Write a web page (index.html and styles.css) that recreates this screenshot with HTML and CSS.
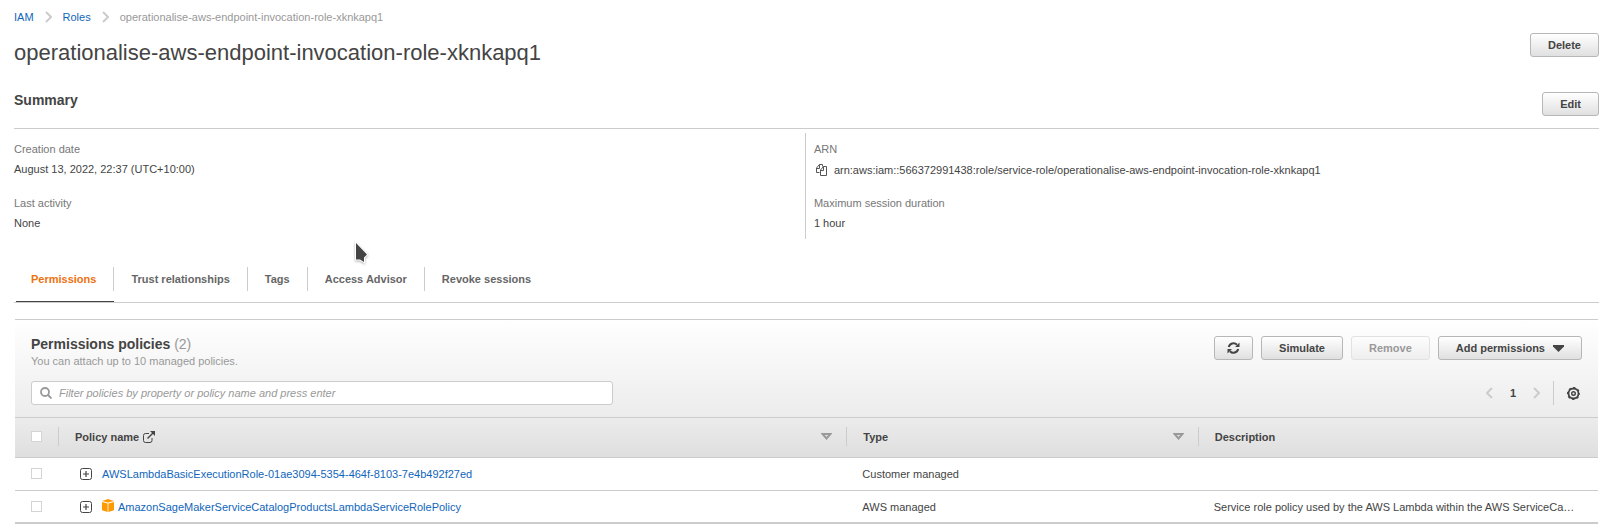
FILE: index.html
```html
<!DOCTYPE html>
<html lang="en">
<head>
<meta charset="utf-8">
<title>IAM role</title>
<link rel="stylesheet" href="styles.css">
</head>
<body>
<main class="page">
  <nav class="crumbs" aria-label="Breadcrumb">
    <a href="#iam">IAM</a>
    <svg class="chevron" width="7" height="12" viewBox="0 0 7 12"><path d="M1 1l5 5-5 5"/></svg>
    <a href="#roles">Roles</a>
    <svg class="chevron" width="7" height="12" viewBox="0 0 7 12"><path d="M1 1l5 5-5 5"/></svg>
    <span>operationalise-aws-endpoint-invocation-role-xknkapq1</span>
  </nav>

  <header class="title-row">
    <h1>operationalise-aws-endpoint-invocation-role-xknkapq1</h1>
    <button type="button" class="btn">Delete</button>
  </header>

  <section>
    <div class="summary-head">
      <h2>Summary</h2>
      <button type="button" class="btn">Edit</button>
    </div>
    <div class="summary">
      <dl class="facts">
        <dt>Creation date</dt>
        <dd>August 13, 2022, 22:37 (UTC+10:00)</dd>
        <dt>Last activity</dt>
        <dd>None</dd>
      </dl>
      <dl class="facts facts-right">
        <dt>ARN</dt>
        <dd class="arn">
          <button type="button" class="icon-btn" aria-label="Copy ARN"><svg width="11" height="12" viewBox="0 0 11 12" fill="none" stroke="#555" stroke-width="1"><path d="M3.500 8.500H.5V4L3.500.5H6.500V2.500M.5 4.500H3.500V.5M4.500 11.500V6L7.500 2.500H10.500V11.500ZM4.500 6.500H7.500V2.500"/></svg></button>
          <span>arn:aws:iam::566372991438:role/service-role/operationalise-aws-endpoint-invocation-role-xknkapq1</span>
        </dd>
        <dt>Maximum session duration</dt>
        <dd>1 hour</dd>
      </dl>
    </div>
  </section>

  <nav class="tabs" aria-label="Role details">
    <a class="tab active" href="#permissions">Permissions</a>
    <a class="tab" href="#trust">Trust relationships</a>
    <a class="tab" href="#tags">Tags</a>
    <a class="tab" href="#advisor">Access Advisor</a>
    <a class="tab" href="#sessions">Revoke sessions</a>
  </nav>

  <section class="panel">
    <div class="panel-head">
      <div class="panel-row">
        <div>
          <h2>Permissions policies <span class="count">(2)</span></h2>
          <p class="hint">You can attach up to 10 managed policies.</p>
        </div>
        <div class="actions">
          <button type="button" class="btn btn-icon" aria-label="Refresh"><svg width="13" height="12" viewBox="0 0 13 12" fill="none" stroke="#444" stroke-width="2"><path d="M1.800 5A4.800 4.800 0 0 1 10 2.800M11.200 7A4.800 4.800 0 0 1 3 9.200"/><path d="M12.500 .5V5H8ZM.5 11.500V7H5Z" fill="#444" stroke="none"/></svg></button>
          <button type="button" class="btn">Simulate</button>
          <button type="button" class="btn" disabled>Remove</button>
          <button type="button" class="btn">Add permissions<svg class="caret" width="11" height="7" viewBox="0 0 11 7"><path d="M0 0H11V1.500L5.500 7 0 1.500Z" fill="#444"/></svg></button>
        </div>
      </div>
      <div class="panel-row">
        <label class="search">
          <svg width="12" height="12" viewBox="0 0 12 12" fill="none" stroke="#999" stroke-width="1.800"><circle cx="5" cy="5" r="4"/><path d="M8 8l3.500 3.500"/></svg>
          <input type="text" aria-label="Filter policies" placeholder="Filter policies by property or policy name and press enter">
        </label>
        <div class="pager">
          <button type="button" class="icon-btn" aria-label="Previous page"><svg class="chevron" width="7" height="12" viewBox="0 0 7 12"><path d="M6 1L1 6l5 5"/></svg></button>
          <b>1</b>
          <button type="button" class="icon-btn" aria-label="Next page"><svg class="chevron" width="7" height="12" viewBox="0 0 7 12"><path d="M1 1l5 5-5 5"/></svg></button>
          <button type="button" class="icon-btn settings" aria-label="Settings"><svg width="13" height="13" viewBox="0 0 13 13" fill="none" stroke="#444"><circle cx="6.500" cy="6.500" r="5" stroke-width="1.800"/><circle cx="6.500" cy="6.500" r="5.900" stroke-width="1.200" stroke-dasharray="2.320 2.320" stroke-dashoffset="1.160"/><circle cx="6.500" cy="6.500" r="1.800" stroke-width="1.400"/></svg></button>
        </div>
      </div>
    </div>

    <table class="policies">
      <colgroup><col class="c-check"><col class="c-name"><col class="c-type"><col class="c-desc"></colgroup>
      <thead>
        <tr>
          <th><input type="checkbox" aria-label="Select all policies"></th>
          <th><div class="th">Policy name <svg class="external" width="12" height="12" viewBox="0 0 12 12" fill="none" stroke="#444"><path d="M6 2.500H2.500a2 2 0 0 0-2 2V9.500a2 2 0 0 0 2 2H7a2 2 0 0 0 2-2V7"/><path d="M4.500 7.500L10 2" stroke-width="1.500"/><path d="M7 0H12V5Z" fill="#444" stroke="none"/></svg><svg class="sort" width="11" height="7" viewBox="0 0 11 7"><path d="M1.500 1H9.500L5.500 5.500Z"/></svg></div></th>
          <th><div class="th">Type<svg class="sort" width="11" height="7" viewBox="0 0 11 7"><path d="M1.500 1H9.500L5.500 5.500Z"/></svg></div></th>
          <th><div class="th">Description</div></th>
        </tr>
      </thead>
      <tbody>
        <tr>
          <td><input type="checkbox" aria-label="Select AWSLambdaBasicExecutionRole"></td>
          <td><div class="name"><button type="button" class="icon-btn" aria-label="Expand"><svg width="12" height="12" viewBox="0 0 12 12" fill="none" stroke="#444"><rect x=".5" y=".5" width="11" height="11" rx="2"/><path d="M3 6H9M6 3V9" stroke-width="1.200"/></svg></button><a href="#policy-1">AWSLambdaBasicExecutionRole-01ae3094-5354-464f-8103-7e4b492f27ed</a></div></td>
          <td>Customer managed</td>
          <td></td>
        </tr>
        <tr>
          <td><input type="checkbox" aria-label="Select AmazonSageMakerServiceCatalogProductsLambdaServiceRolePolicy"></td>
          <td><div class="name"><button type="button" class="icon-btn" aria-label="Expand"><svg width="12" height="12" viewBox="0 0 12 12" fill="none" stroke="#444"><rect x=".5" y=".5" width="11" height="11" rx="2"/><path d="M3 6H9M6 3V9" stroke-width="1.200"/></svg></button><a href="#policy-2"><svg width="12" height="13" viewBox="0 0 12 13" fill="#f90"><path d="M0 2L6 0l6 2-6 1.500ZM0 3l5.600 1.400V13L0 11.200ZM12 3L6.400 4.400V13l5.600-1.800Z"/></svg>AmazonSageMakerServiceCatalogProductsLambdaServiceRolePolicy</a></div></td>
          <td>AWS managed</td>
          <td class="desc">Service role policy used by the AWS Lambda within the AWS ServiceCa…</td>
        </tr>
      </tbody>
    </table>
  </section>
</main>
<svg class="pointer" width="18" height="26" viewBox="0 0 18 26"><path d="M3 3V19.500H7L11 22V17.500L14 14.500Z" fill="#444" stroke="#fff" stroke-width="2" paint-order="stroke"/></svg>
</body>
</html>
```

FILE: styles.css
```css
* { box-sizing: border-box; }
body {
  margin: 0;
  background: #fff;
  color: #444;
  font: 11px/16px "Liberation Sans", Arial, sans-serif;
}
h1, h2, p, dl, dd { margin: 0; }
a { color: #1166bb; text-decoration: none; }
svg { display: block; flex: none; }
button { font-family: inherit; }
.page { padding: 9px 10px 0 14px; }

.crumbs { display: flex; align-items: center; gap: 11px; color: #999; }
.chevron { fill: none; stroke: #ccc; stroke-width: 2; }

.title-row { display: flex; justify-content: space-between; align-items: flex-start; padding-top: 8px; }
h1 { font-size: 22px; line-height: 40px; font-weight: 400; }
h2 { font-size: 14px; line-height: 18px; font-weight: 700; }

.btn {
  display: flex;
  align-items: center;
  height: 24px;
  padding: 0 17px;
  border: 1px solid #b7b7b7;
  border-radius: 3px;
  background: linear-gradient(#fff, #e0e0e0);
  color: #444;
  font-size: 11px;
  line-height: 16px;
  font-weight: 700;
}
.btn:disabled { border-color: #e2e2e2; background: linear-gradient(#fdfdfd, #eee); color: #999; }
.btn-icon { padding: 0 12px; }
.caret { margin-left: 8px; }
.icon-btn { display: flex; padding: 0; border: 0; background: none; }

.summary-head {
  display: flex;
  justify-content: space-between;
  align-items: flex-start;
  padding: 18px 0 12px;
  border-bottom: 1px solid #ccc;
}
.summary-head .btn { margin-top: 1px; }
.summary { display: grid; grid-template-columns: 49.9% 50.1%; padding-top: 4px; }
.facts { padding: 8px 0; }
.facts-right { padding-left: 8px; border-left: 1px solid #ccc; }
dt { color: #777; }
dd { padding: 4px 0 18px; }
dd:last-child { padding-bottom: 0; }
.arn { display: flex; align-items: center; gap: 7px; padding: 5px 0 17px 2px; }

.tabs { display: flex; margin-top: 21px; padding: 7px 0 0 2px; border-bottom: 1px solid #ccc; }
.tab { display: flex; padding-bottom: 10px; border-bottom: 1px solid transparent; color: #666; font-weight: 700; line-height: 24px; }
.tab::before { content: ""; width: 17px; }
.tab::after { content: ""; width: 17px; border-right: 1px solid #ccc; }
.tab:first-child::before { width: 15px; }
.tab:last-child::after { border: 0; }
.tab.active { color: #ec7211; border-bottom-color: #444; }

.panel { margin: 16px 1px 0; border-top: 1px solid #ccc; border-bottom: 2px solid #ccc; }
.panel-head { padding: 15px 16px 12px; background: linear-gradient(#fff, #ececec); }
.panel-row { display: flex; justify-content: space-between; }
.panel-row + .panel-row { margin-top: 12px; }
.count { color: #999; font-weight: 400; }
.hint { color: #999; }
.actions { display: flex; gap: 8px; padding-top: 1px; }

.search {
  display: flex;
  align-items: center;
  gap: 7px;
  width: 37.5%;
  height: 24px;
  padding: 0 8px;
  border: 1px solid #ccc;
  border-radius: 3px;
  background: #fff;
}
.search input { flex: 1; min-width: 0; padding: 0; border: 0; outline: 0; background: none; color: #444; font: inherit; }
.search input::placeholder { color: #999; font-style: italic; }
.pager { display: flex; align-items: center; gap: 17px; }
.settings { align-items: center; height: 24px; margin-left: -4px; padding: 0 2px 0 13px; border-left: 1px solid #ccc; }

.policies { width: 100%; table-layout: fixed; border-collapse: separate; border-spacing: 0; }
.c-check { width: 43px; }
.c-name { width: 49.8%; }
.c-type { width: 22.2%; }
.policies th { height: 41px; padding: 0 0 2px; border: solid #ccc; border-width: 1px 0; text-align: left; }
.policies thead { background: linear-gradient(#ececec, #dedede); }
.th { display: flex; align-items: center; height: 19px; padding: 0 14px 0 16px; border-left: 1px solid #ccc; }
.external { margin-left: 4px; }
.sort { margin-left: auto; fill: none; stroke: #999; stroke-width: 2; }
.policies td { height: 33px; padding: 0 16px; border-bottom: 1px solid #ccc; }
.policies tr:last-child td { height: 31px; border-bottom: 0; }
.policies th:first-child { padding: 0 0 2px 16px; }
.policies td:first-child { padding: 0 0 1px 16px; }
.policies td:nth-child(2) { padding-left: 22px; }
.policies input { display: block; appearance: none; width: 11px; height: 11px; margin: 0; border: 1px solid #d4d4d4; background: #fff; }
.name { display: flex; align-items: center; gap: 10px; }
.name a { display: flex; gap: 4px; }
.desc { overflow: hidden; text-overflow: ellipsis; white-space: nowrap; }

.pointer { position: absolute; left: 353px; top: 240px; filter: drop-shadow(0 1px 1px rgba(0, 0, 0, .3)); }
```
